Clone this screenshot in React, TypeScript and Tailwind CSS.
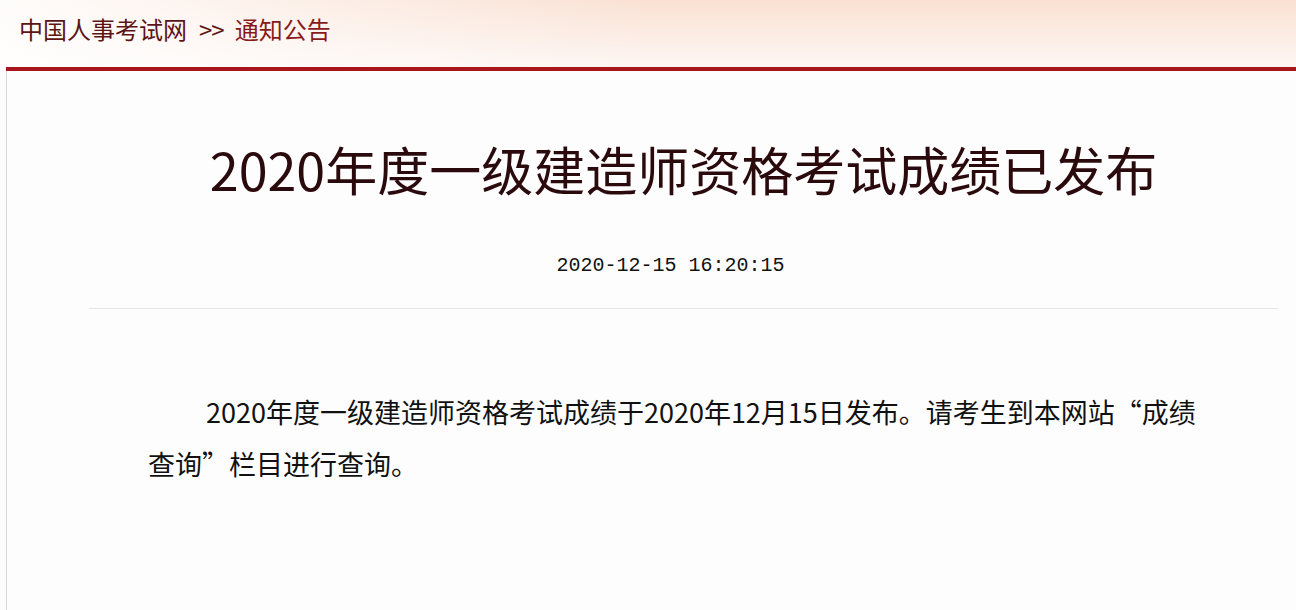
import React from "react";

const cjk = "font-['Noto_Sans_CJK_SC','Noto_Sans',sans-serif]";

export default function App() {
  return (
    <div className={`w-[1296px] h-[610px] overflow-hidden bg-[#fdfdfd] ${cjk}`}>
      <div className="h-[67px] bg-[linear-gradient(to_right,rgba(255,255,255,0.9),rgba(255,255,255,0)_50%),linear-gradient(to_bottom,#fae1d3,#fdf6f3)] flex items-center pl-[19px] pb-[10px]">
        <span className="text-[24px] leading-none text-[#5c1414]">中国人事考试网</span>
        <span className="text-[24px] leading-none text-[#5c1414] ml-[12px] tracking-[-1px]">&gt;&gt;</span>
        <span className="text-[24px] leading-none text-[#8a1a1a] ml-[11px]">通知公告</span>
      </div>
      <div className="ml-[6px] h-[4px] bg-[#a8161c]" />
      <div className="ml-[6px] border-l border-[#d6d6d6] h-[539px] flex flex-col">
        <h1 className="mt-[68px] text-center text-[52px] leading-[60px] text-[#2a0a0c] pl-[64px]">
          2020年度一级建造师资格考试成绩已发布
        </h1>
        <div className="mt-[55px] text-center font-['Liberation_Mono',monospace] text-[20px] leading-[24px] text-[#111] pl-[38px]">
          2020-12-15 16:20:15
        </div>
        <div className="ml-[82px] mr-[18px] mt-[30px] h-px bg-[#e4e4e4]" />
        <p className="mt-[77px] ml-[141px] w-[1065px] text-[27px] leading-[52px] text-[#111] indent-[58px]">
          2020年度一级建造师资格考试成绩于2020年12月15日发布。请考生到本网站“成绩查询”栏目进行查询。
        </p>
      </div>
    </div>
  );
}
